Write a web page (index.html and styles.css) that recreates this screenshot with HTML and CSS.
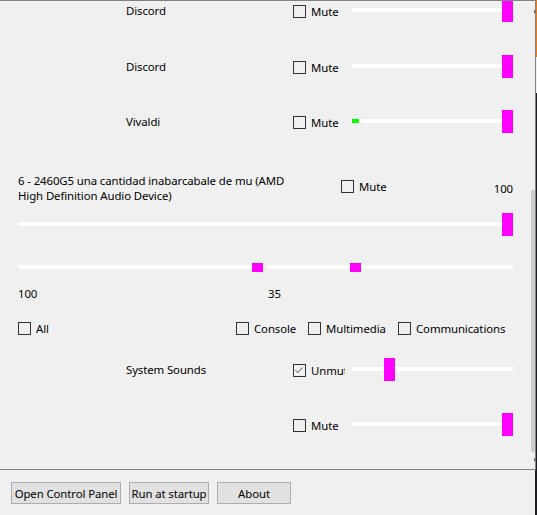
FILE: index.html
```html
<!DOCTYPE html>
<html lang="en">
<head>
<meta charset="utf-8">
<title>Volume Mixer</title>
<link rel="stylesheet" href="styles.css">
</head>
<body>
<div class="screen">
  <div class="window">
    <div class="panel">
      <div class="list">
        <div class="app-row">
          <span class="app-name">Discord</span>
          <label class="chk"><span class="box"></span><span class="chk-text">Mute</span></label>
          <div class="slider"><div class="track"></div><div class="thumb at-end"></div></div>
        </div>
        <div class="app-row">
          <span class="app-name">Discord</span>
          <label class="chk"><span class="box"></span><span class="chk-text">Mute</span></label>
          <div class="slider"><div class="track"></div><div class="thumb at-end"></div></div>
        </div>
        <div class="app-row">
          <span class="app-name">Vivaldi</span>
          <label class="chk"><span class="box"></span><span class="chk-text">Mute</span></label>
          <div class="slider"><div class="track"></div><div class="peak" style="width:7px"></div><div class="thumb at-end"></div></div>
        </div>

        <div class="device">
          <div class="dev-head">
            <div class="dev-name">6 - 2460G5 una cantidad inabarcabale de mu (AMD<br>High Definition Audio Device)</div>
            <label class="chk dev-mute"><span class="box"></span><span class="chk-text">Mute</span></label>
            <span class="dev-level">100</span>
          </div>
          <div class="slider big"><div class="track"></div><div class="thumb at-end"></div></div>
          <div class="dual">
            <div class="slider small"><div class="track"></div><div class="thumb mini at-end"></div></div>
            <div class="slider small"><div class="track"></div><div class="thumb mini" style="left:82px"></div></div>
          </div>
          <div class="dual-labels">
            <span class="dual-label">100</span>
            <span class="dual-label">35</span>
          </div>
          <div class="filters">
            <label class="chk filter-all"><span class="box"></span><span class="chk-text">All</span></label>
            <div class="filter-group">
              <label class="chk"><span class="box"></span><span class="chk-text">Console</span></label>
              <label class="chk"><span class="box"></span><span class="chk-text">Multimedia</span></label>
              <label class="chk"><span class="box"></span><span class="chk-text">Communications</span></label>
            </div>
          </div>
        </div>

        <div class="app-row">
          <span class="app-name">System Sounds</span>
          <label class="chk"><span class="box checked"><svg viewBox="0 0 13 13" width="11" height="11"><path d="M1.5 6 L4.5 9 L10 3" fill="none" stroke="#444" stroke-width="1.1"/></svg></span><span class="chk-text">Unmute</span></label>
          <div class="slider"><div class="track"></div><div class="thumb" style="left:32px"></div></div>
        </div>
        <div class="app-row">
          <span class="app-name"></span>
          <label class="chk"><span class="box"></span><span class="chk-text">Mute</span></label>
          <div class="slider"><div class="track"></div><div class="thumb at-end"></div></div>
        </div>
      </div>
      <div class="vscroll"><div class="vthumb"></div></div>
    </div>
    <div class="footer">
      <button class="btn btn-panel">Open Control Panel</button>
      <button class="btn btn-startup">Run at startup</button>
      <button class="btn btn-about">About</button>
    </div>
  </div>
  <div class="edge"></div>
</div>
</body>
</html>
```
FILE: styles.css
```css
* { box-sizing: border-box; }

html, body {
  margin: 0;
  padding: 0;
  background: #f0f0f0;
}

body {
  font-family: "Noto Sans", "Open Sans", sans-serif;
  font-size: 11.4px;
  letter-spacing: -0.1px;
  line-height: 15px;
  color: #000;
}

.screen {
  display: flex;
  width: 537px;
  height: 515px;
  overflow: hidden;
}

.window {
  width: 536px;
  display: flex;
  flex-direction: column;
}

/* desktop behind the window's right edge */
.edge {
  width: 1px;
  background: linear-gradient(#e8781c 0, #e8781c 57px, #f0f0f0 57px, #f0f0f0 93px, #1c1c24 93px);
}

/* scrolling mixer panel */
.panel {
  height: 470px;
  display: flex;
  border-top: 1px solid #828282;
  border-right: 1px solid #828282;
  border-bottom: 1px solid #828282;
  overflow: hidden;
}

.list {
  width: 531px;
  margin-top: -2px;
  display: flex;
  flex-direction: column;
}

.vscroll {
  position: relative;
  width: 4px;
}
.vscroll::before,
.vscroll::after {
  content: "";
  position: absolute;
  right: 0;
  width: 1px;
  height: 3px;
  background: #606060;
}
.vscroll::before { top: 9px; }
.vscroll::after { top: 457px; }

.vthumb {
  margin-top: 189px;
  height: 262px;
  background: #cdcdcd;
}

/* one application row */
.app-row {
  height: 56px;
  display: flex;
  align-items: flex-start;
}

.app-name {
  width: 293px;
  padding-left: 126px;
  padding-top: 4px;
  white-space: nowrap;
}

/* checkbox */
.chk {
  display: flex;
  align-items: center;
  gap: 5px;
  white-space: nowrap;
}
.box {
  width: 13px;
  height: 13px;
  flex: none;
  border: 1px solid #333;
  display: flex;
  align-items: center;
  justify-content: center;
}
.box svg { display: block; flex: none; }

.app-row .chk {
  width: 52px;
  margin-right: 7px;
  margin-top: 5px;
  align-items: flex-start;
  overflow: hidden;
}
.app-row .chk .box { margin-top: 1px; }

/* trackbar */
.slider {
  position: relative;
  width: 161px;
  height: 23px;
  flex: none;
}
.track {
  position: absolute;
  left: 0;
  right: 0;
  top: 9px;
  height: 4px;
  background: #fff;
}
.peak {
  position: absolute;
  left: 0;
  top: 9px;
  height: 4px;
  background: #00ff00;
}
.thumb {
  position: absolute;
  top: 0;
  width: 11px;
  height: 23px;
  background: #ff00ff;
}
.thumb.at-end { right: 0; }

/* output device block */
.device {
  display: flex;
  flex-direction: column;
  padding-left: 18px;
}

.dev-head {
  height: 47px;
  display: flex;
  align-items: flex-start;
}
.dev-name {
  width: 323px;
  padding-top: 7px;
  white-space: nowrap;
}
.dev-mute {
  margin-top: 14px;
  width: 120px;
  align-items: flex-start;
}
.dev-mute .chk-text { margin-top: -1px; }
.dev-level {
  width: 52px;
  text-align: right;
  padding-top: 15px;
}

.slider.big { width: 495px; }

.dual {
  display: flex;
  gap: 5px;
  margin-top: 27px;
  height: 9px;
}
.slider.small {
  width: 245px;
  height: 9px;
}
.slider.small .track { top: 2px; }
.thumb.mini { height: 9px; }

.dual-labels {
  display: flex;
  gap: 5px;
  margin-top: 14px;
  height: 15px;
}
.dual-label { width: 245px; }

.filters {
  display: flex;
  margin-top: 19px;
  height: 17px;
  align-items: center;
}
.filter-all { width: 218px; }
.filter-group { display: flex; }
.filter-group .chk:nth-child(1) { width: 72px; }
.filter-group .chk:nth-child(2) { width: 90px; }
.device + .app-row { margin-top: 21px; }

/* buttons under the panel */
.footer {
  flex: 1;
  display: flex;
  gap: 8px;
  padding: 12px 0 0 11px;
  border-right: 1px solid #1c1c24;
}
.btn {
  height: 22px;
  padding: 0;
  font: inherit;
  letter-spacing: inherit;
  white-space: nowrap;
  color: #000;
  background: #e1e1e1;
  border: 1px solid #adadad;
  border-radius: 0;
}
.btn-panel { width: 110px; }
.btn-startup { width: 80px; }
.btn-about { width: 74px; }
```
